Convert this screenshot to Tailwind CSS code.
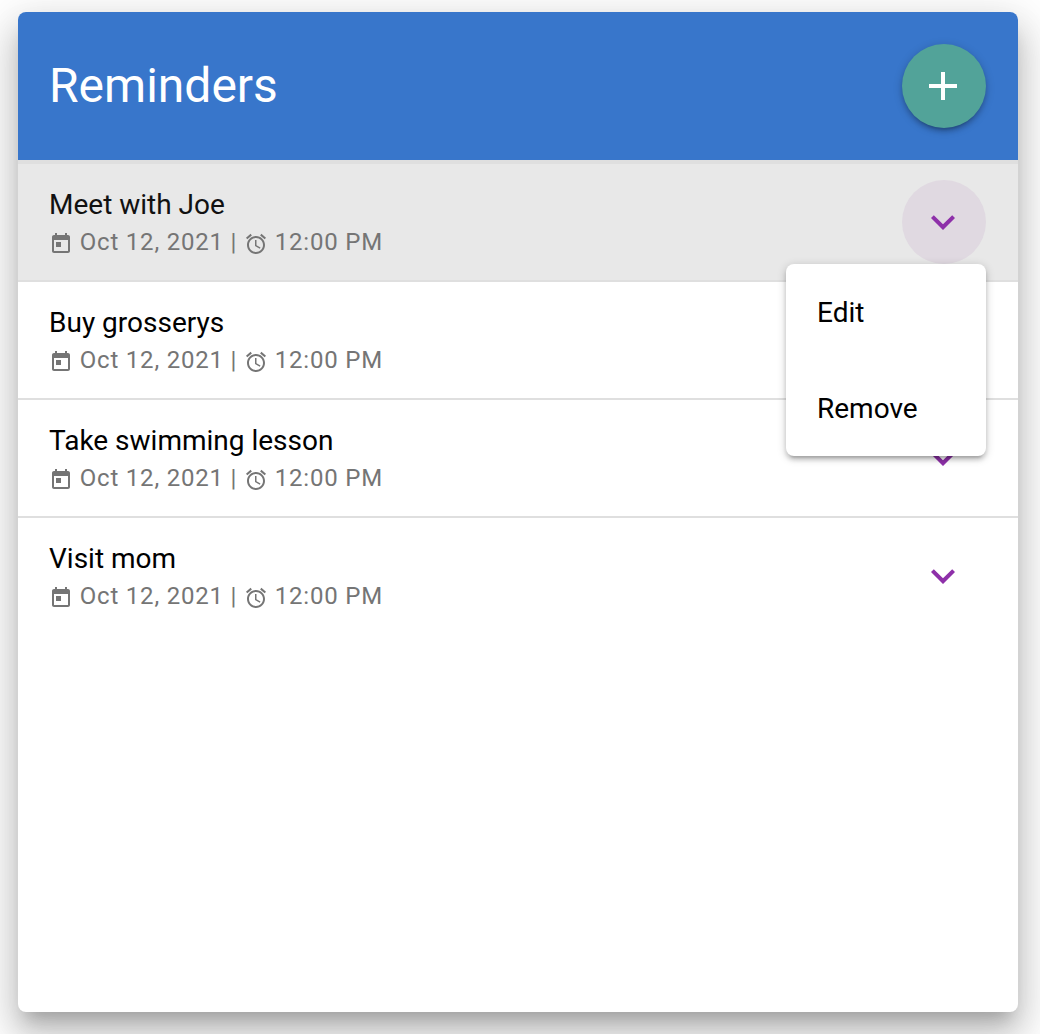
<!DOCTYPE html>
<html lang="en">
<head>
<meta charset="utf-8">
<title>Reminders</title>
<script src="https://cdn.jsdelivr.net/npm/@tailwindcss/browser@4"></script>
</head>
<body class="h-[1034px] overflow-hidden bg-white pt-3 pl-[18px] font-[Roboto,sans-serif] text-black">
<svg class="hidden">
  <symbol id="today" viewBox="0 0 24 24"><path d="M19 3h-1V1h-2v2H8V1H6v2H5c-1.11 0-1.99.9-1.99 2L3 19c0 1.1.89 2 2 2h14c1.1 0 2-.9 2-2V5c0-1.1-.9-2-2-2zm0 16H5V8h14v11zM7 10h5v5H7z"/></symbol>
  <symbol id="alarm" viewBox="0 0 24 24"><path d="M22 5.72l-4.6-3.86-1.29 1.53 4.6 3.86L22 5.72zM7.88 3.39L6.6 1.86 2 5.71l1.29 1.53 4.59-3.85zM12.5 8H11v6l4.75 2.85.75-1.23-4-2.37V8zM12 4c-4.97 0-9 4.03-9 9s4.02 9 9 9c4.97 0 9-4.03 9-9s-4.03-9-9-9zm0 16c-3.87 0-7-3.13-7-7s3.13-7 7-7 7 3.13 7 7-3.13 7-7 7z"/></symbol>
  <symbol id="down" viewBox="0 0 24 24"><path d="M7.41 8.59L12 13.17l4.59-4.58L18 10l-6 6-6-6 1.41-1.41z"/></symbol>
</svg>
<main class="relative h-[1000px] w-[1000px] rounded-lg bg-white shadow-[0_14px_16px_-8px_rgba(0,0,0,0.2),0_24px_34px_4px_rgba(0,0,0,0.14),0_10px_44px_8px_rgba(0,0,0,0.12)]">
  <header class="flex h-[148px] items-center justify-between rounded-t-lg bg-[#3876cb] px-8 text-white">
    <h1 class="-ml-px text-5xl leading-16">Reminders</h1>
    <button class="flex size-[84px] items-center justify-center rounded-full bg-[#52a399] pr-0.5 shadow-[0_2px_10px_rgba(0,0,0,0.2),0_4px_4px_rgba(0,0,0,0.14),0_6px_2px_-4px_rgba(0,0,0,0.12)]">
      <svg class="size-12" viewBox="0 0 24 24" fill="currentColor"><path d="M19 13h-6v6h-2v-6H5v-2h6V5h2v6h6v2z"/></svg>
    </button>
  </header>
  <ul class="border-t-4 border-[#dfdfdf]">
    <li class="flex h-[118px] items-center justify-between border-b-2 border-[#dfdfdf] bg-[#e8e8e8] px-8 text-[#111]">
      <div class="-ml-px">
        <p class="mt-1 text-[28px] leading-[34px]">Meet with Joe</p>
        <p class="mt-0.5 flex h-9 items-center whitespace-pre text-2xl tracking-[0.8px] text-[#757575]"><svg class="mt-1 size-6" fill="currentColor"><use href="#today"/></svg> Oct 12, 2021 | <svg class="mt-1 size-6" fill="currentColor"><use href="#alarm"/></svg> 12:00 PM</p>
      </div>
      <button class="flex size-[84px] items-center justify-center rounded-full bg-[#e0d9e1] pr-0.5 text-[#8e30a9]"><svg class="size-12" fill="currentColor"><use href="#down"/></svg></button>
    </li>
    <li class="flex h-[118px] items-center justify-between border-b-2 border-[#dfdfdf] px-8">
      <div class="-ml-px">
        <p class="mt-1 text-[28px] leading-[34px]">Buy grosserys</p>
        <p class="mt-0.5 flex h-9 items-center whitespace-pre text-2xl tracking-[0.8px] text-[#757575]"><svg class="mt-1 size-6" fill="currentColor"><use href="#today"/></svg> Oct 12, 2021 | <svg class="mt-1 size-6" fill="currentColor"><use href="#alarm"/></svg> 12:00 PM</p>
      </div>
      <button class="flex size-[84px] items-center justify-center rounded-full pr-0.5 text-[#8e30a9]"><svg class="size-12" fill="currentColor"><use href="#down"/></svg></button>
    </li>
    <li class="flex h-[118px] items-center justify-between border-b-2 border-[#dfdfdf] px-8">
      <div class="-ml-px">
        <p class="mt-1 text-[28px] leading-[34px]">Take swimming lesson</p>
        <p class="mt-0.5 flex h-9 items-center whitespace-pre text-2xl tracking-[0.8px] text-[#757575]"><svg class="mt-1 size-6" fill="currentColor"><use href="#today"/></svg> Oct 12, 2021 | <svg class="mt-1 size-6" fill="currentColor"><use href="#alarm"/></svg> 12:00 PM</p>
      </div>
      <button class="flex size-[84px] items-center justify-center rounded-full pr-0.5 text-[#8e30a9]"><svg class="size-12" fill="currentColor"><use href="#down"/></svg></button>
    </li>
    <li class="flex h-[116px] items-center justify-between px-8">
      <div class="-ml-px">
        <p class="mt-1 text-[28px] leading-[34px]">Visit mom</p>
        <p class="mt-0.5 flex h-9 items-center whitespace-pre text-2xl tracking-[0.8px] text-[#757575]"><svg class="mt-1 size-6" fill="currentColor"><use href="#today"/></svg> Oct 12, 2021 | <svg class="mt-1 size-6" fill="currentColor"><use href="#alarm"/></svg> 12:00 PM</p>
      </div>
      <button class="flex size-[84px] items-center justify-center rounded-full pr-0.5 text-[#8e30a9]"><svg class="size-12" fill="currentColor"><use href="#down"/></svg></button>
    </li>
  </ul>
  <!-- Row action menu -->
  <ul class="absolute top-[252px] right-8 w-[200px] rounded-lg bg-white text-[28px] shadow-[0_2px_10px_rgba(0,0,0,0.2),0_4px_4px_rgba(0,0,0,0.14),0_6px_2px_-4px_rgba(0,0,0,0.12)]">
    <li class="flex h-24 items-center pt-0.5 pl-[31px]">Edit</li>
    <li class="flex h-24 items-center pt-0.5 pl-[31px]">Remove</li>
  </ul>
</main>
</body>
</html>
